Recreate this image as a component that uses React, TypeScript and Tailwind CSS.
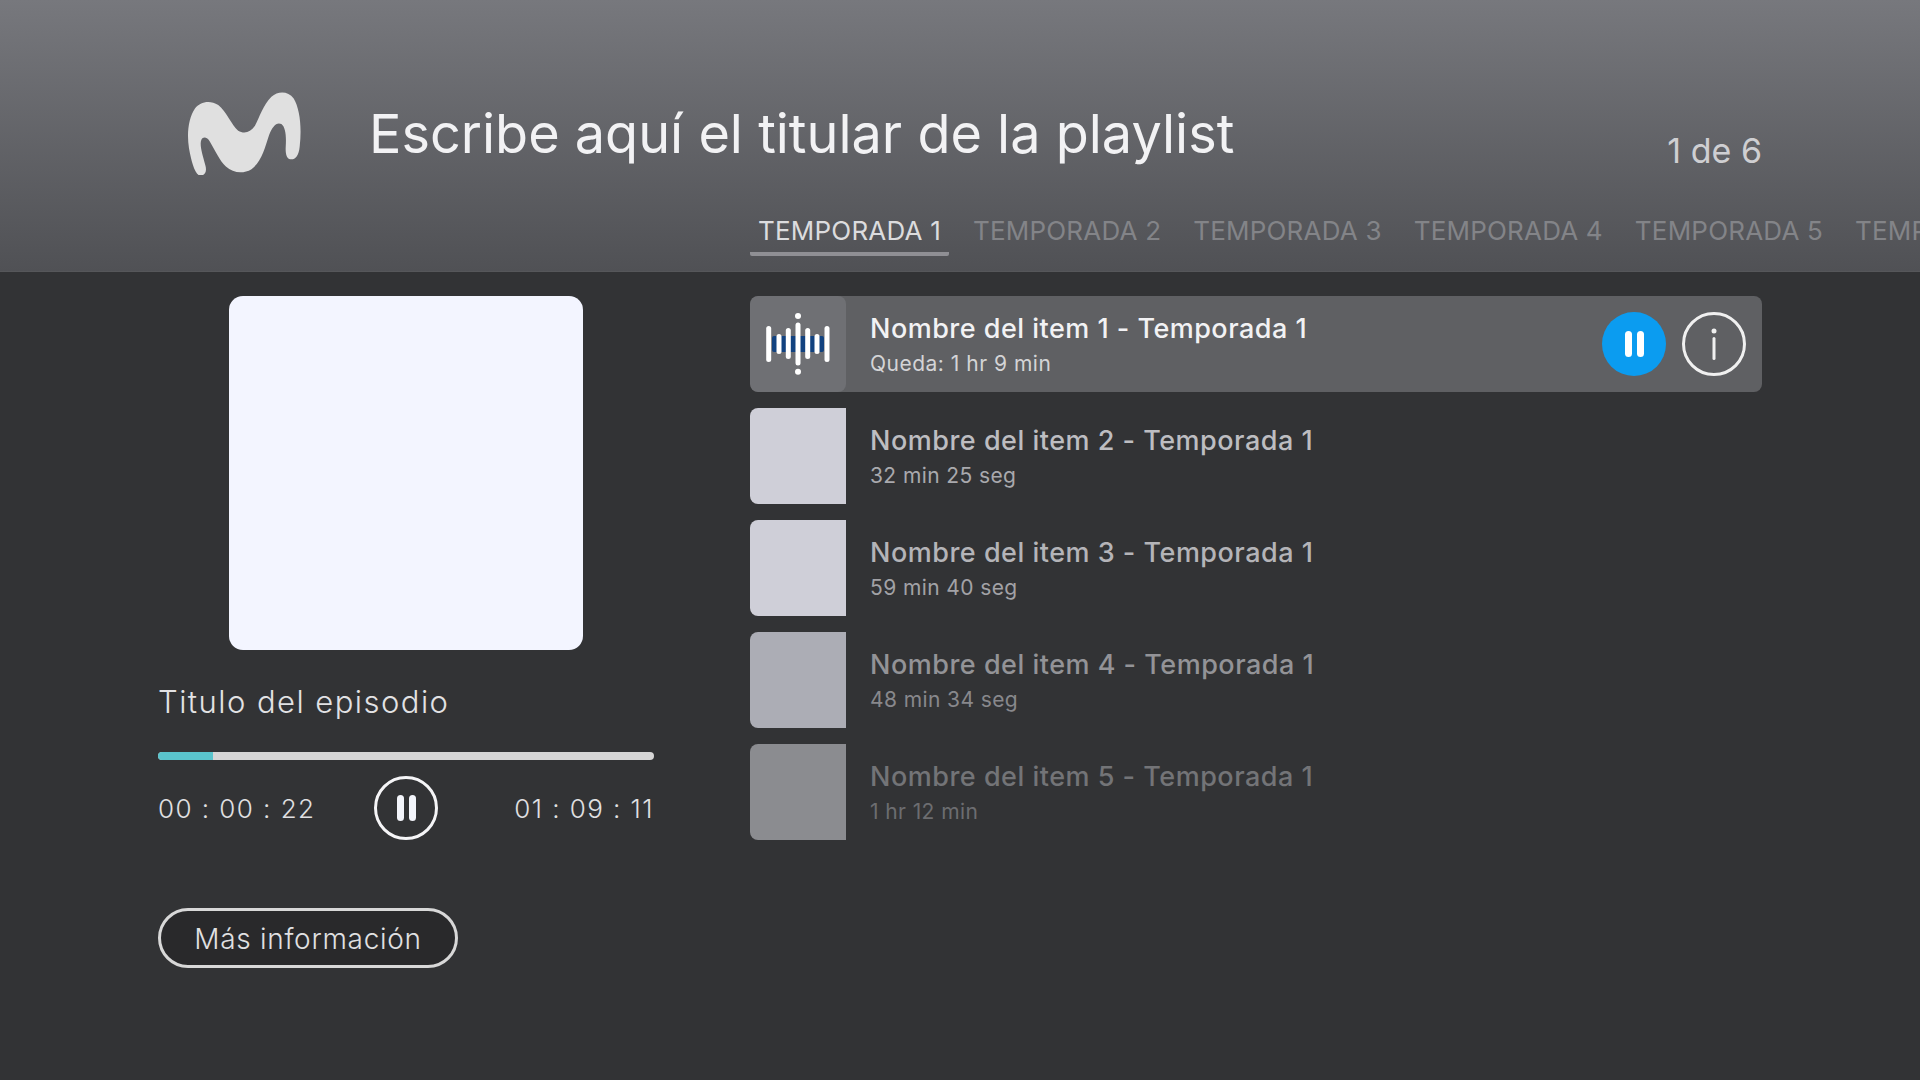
const sans = "font-['Inter',sans-serif]";

const tabs = ["TEMPORADA 1", "TEMPORADA 2", "TEMPORADA 3", "TEMPORADA 4", "TEMPORADA 5", "TEMPORADA 6"];

const items = [
  { title: "Nombre del item 2 - Temporada 1", sub: "32 min 25 seg", thumb: "bg-[#cfcfd8]", text: "text-[#bdbdc1]", subText: "text-[#a9a9ad]" },
  { title: "Nombre del item 3 - Temporada 1", sub: "59 min 40 seg", thumb: "bg-[#cfcfd8]", text: "text-[#b4b4b8]", subText: "text-[#a2a2a6]" },
  { title: "Nombre del item 4 - Temporada 1", sub: "48 min 34 seg", thumb: "bg-[#acadb5]", text: "text-[#939397]", subText: "text-[#88888c]" },
  { title: "Nombre del item 5 - Temporada 1", sub: "1 hr 12 min", thumb: "bg-[#8b8c90]", text: "text-[#737477]", subText: "text-[#6c6d70]" },
];

function MovistarLogo() {
  return (
    <svg width="118" height="85" viewBox="195 150 355 255" className="shrink-0">
      <path
        fill="#e0e0e0"
        d="M240 407C225 405 214 365 207 325C200 280 205 235 225 205C240 185 270 178 295 195C320 215 335 255 355 272C372 282 392 278 405 258C420 230 430 195 455 170C475 152 505 152 522 175C540 205 547 260 540 320C537 350 525 360 512 358C500 355 497 340 498 320C500 290 498 262 485 252C470 245 458 260 448 285C435 325 425 365 395 388C370 403 340 400 318 380C298 360 285 330 270 305C262 292 250 288 244 300C238 315 248 345 256 375C262 395 255 408 240 407Z"
      />
    </svg>
  );
}

function WaveIcon() {
  const bars = [
    [18.7, 32.5, 63.5],
    [29, 40.5, 55.5],
    [38.3, 34.5, 60.5],
    [48, 29, 67],
    [57.7, 34.5, 60.5],
    [67, 40.5, 55.5],
    [77, 32.5, 63.5],
  ];
  return (
    <svg width="96" height="96" viewBox="0 0 96 96">
      <rect x="22" y="40" width="52" height="16" rx="2" fill="#12427f" />
      {bars.map(([x, y1, y2]) => (
        <line key={x} x1={x} x2={x} y1={y1} y2={y2} stroke="#fff" strokeWidth="5" strokeLinecap="round" />
      ))}
      <circle cx="48" cy="20" r="3" fill="#fff" />
      <circle cx="48" cy="75.7" r="3" fill="#fff" />
    </svg>
  );
}

function PauseBars({ color = "bg-white" }: { color?: string }) {
  return (
    <div className="flex gap-[5px]">
      <div className={`h-[26px] w-[7px] rounded-full ${color}`} />
      <div className={`h-[26px] w-[7px] rounded-full ${color}`} />
    </div>
  );
}

export default function App() {
  return (
    <div className={`${sans} flex h-screen w-full flex-col overflow-hidden bg-[#323335]`}>
      {/* Header */}
      <header className="h-[272px] shrink-0 border-b border-[#56575a] bg-gradient-to-b from-[#77787d] to-[#505155]">
        <div className="flex h-[206px] pl-[185px] pr-[158px] pt-[90px]">
          <MovistarLogo />
          <h1 className="ml-[66px] mt-[9px] h-[70px] text-[54px] leading-[70px] font-normal text-[#f2f2f4]">
            Escribe aquí el titular de la playlist
          </h1>
          <div className="ml-auto mt-[40px] text-[34px] leading-[42px] text-[#cfcfd2]">1 de 6</div>
        </div>
        <nav className="ml-[750px] flex h-[50px] overflow-hidden">
          {tabs.map((t, i) => (
            <div key={t} className={`mr-[16px] h-[50px] shrink-0 px-[8px] pt-[8px] text-[26px] leading-[34px] tracking-[0.2px] ${i === 0 ? "border-b-[4px] border-[#8f8f94] text-[#dcdcde] rounded-b-[2px]" : "text-[#838488]"}`}>
              {t}
            </div>
          ))}
        </nav>
      </header>

      {/* Body */}
      <main className="flex flex-1 pl-[158px] pr-[158px] pt-[24px]">
        {/* Player */}
        <section className="flex w-[496px] shrink-0 flex-col">
          <div className="mx-auto h-[354px] w-[354px] rounded-[14px] bg-[#f3f5ff]" />
          <div className="mt-[32px] text-[31px] leading-[40px] font-light tracking-[1.45px] text-[#e2e2e4]">Titulo del episodio</div>
          <div className="mt-[30px] h-[8px] w-full overflow-hidden rounded-full bg-[#d6d6d6]">
            <div className="h-full w-[55px] bg-[#5ac4cc]" />
          </div>
          <div className="mt-[16px] flex items-center justify-between">
            <span className="w-[180px] whitespace-nowrap text-[26px] font-light tracking-[1.45px] text-[#e0e0e2]">00 : 00 : 22</span>
            <div className="flex h-[64px] w-[64px] items-center justify-center rounded-full border-[3px] border-[#f5f5f7]">
              <PauseBars color="bg-[#f3f5fb]" />
            </div>
            <span className="w-[180px] whitespace-nowrap text-right text-[26px] font-light tracking-[1.45px] text-[#e0e0e2]">01 : 09 : 11</span>
          </div>
          <button className="mt-[68px] flex h-[60px] w-[300px] items-center justify-center rounded-full border-[3px] border-[#d8d8d8] bg-[#29292b] pt-[1px] text-[28px] font-light tracking-[0.7px] text-[#e0e0e2]">
            Más información
          </button>
        </section>

        {/* List */}
        <section className="ml-[96px] flex flex-1 flex-col gap-[16px]">
          <div className="flex h-[96px] items-center overflow-hidden rounded-[8px] bg-[#5f6063]">
            <div className="h-[96px] w-[96px] shrink-0 rounded-[8px] bg-[#6f7074]">
              <WaveIcon />
            </div>
            <div className="ml-[24px] flex-1 pt-[1px]">
              <div className="-mt-[1px] text-[27px] leading-[36px] font-medium tracking-[0.48px] text-[#f2f2f4]">Nombre del item 1 - Temporada 1</div>
              <div className="mt-[3px] text-[21px] leading-[28px] tracking-[0.5px] text-[#d4d4d6]">Queda: 1 hr 9 min</div>
            </div>
            <div className="flex h-[64px] w-[64px] items-center justify-center rounded-full bg-[#0b9cf0]">
              <PauseBars />
            </div>
            <div className="ml-[16px] mr-[16px] flex h-[64px] w-[64px] items-center justify-center rounded-full border-[3px] border-[#f0f0f0]">
              <svg width="10" height="32" viewBox="0 0 10 32">
                <circle cx="5" cy="3" r="2.5" fill="#f0f0f0" />
                <rect x="3.5" y="9" width="3" height="23" rx="1.5" fill="#f0f0f0" />
              </svg>
            </div>
          </div>
          {items.map((it) => (
            <div key={it.title} className="flex h-[96px] items-center">
              <div className={`h-[96px] w-[96px] shrink-0 rounded-l-[8px] ${it.thumb}`} />
              <div className="ml-[24px] pt-[1px]">
                <div className={`-mt-[1px] text-[27px] leading-[36px] font-medium tracking-[0.5px] ${it.text}`}>{it.title}</div>
                <div className={`mt-[3px] text-[21px] leading-[28px] tracking-[0.4px] ${it.subText}`}>{it.sub}</div>
              </div>
            </div>
          ))}
        </section>
      </main>
    </div>
  );
}
